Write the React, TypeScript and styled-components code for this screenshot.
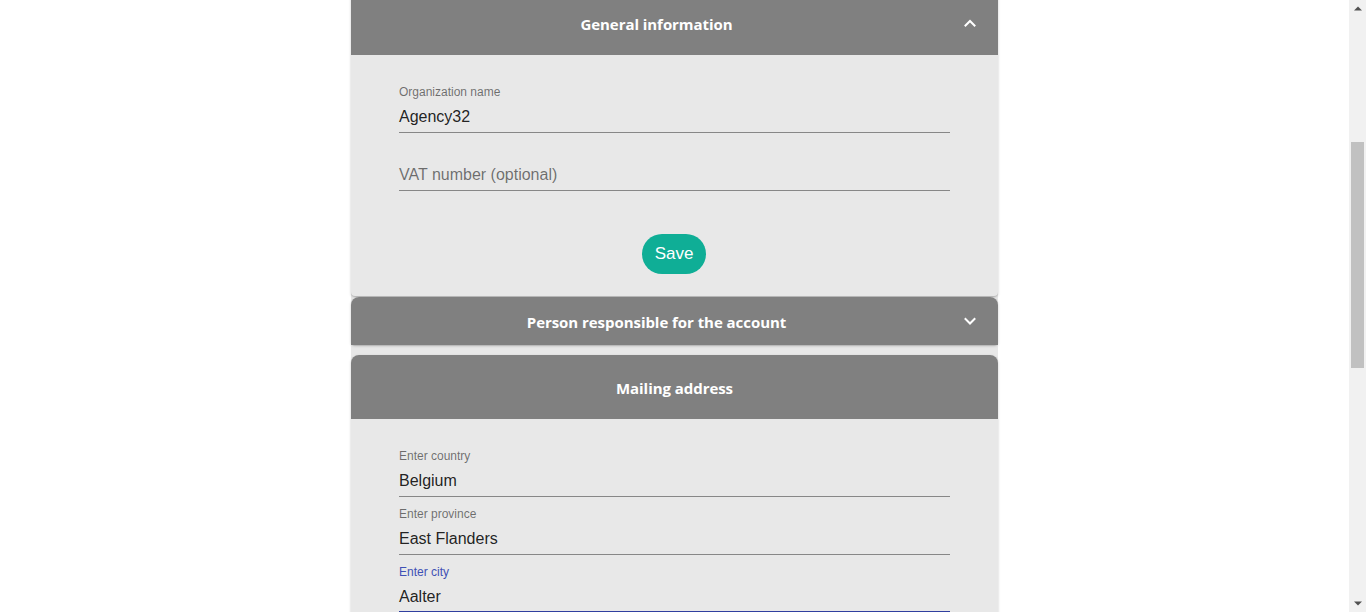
import React from "react";
import styled, { createGlobalStyle } from "styled-components";

const GlobalStyle = createGlobalStyle`
  html, body {
    margin: 0;
    padding: 0;
    background: #ffffff;
    overflow: hidden;
  }
  * { box-sizing: border-box; }
`;

const Viewport = styled.div`
  display: flex;
  height: 100vh;
  width: 100vw;
  overflow: hidden;
  font-family: "Liberation Sans", Arial, sans-serif;
`;

const Main = styled.main`
  flex: 1;
  display: flex;
  justify-content: center;
  overflow: hidden;
`;

const Column = styled.div`
  width: 647px;
  margin-top: -9px;
  display: flex;
  flex-direction: column;
  background: #e8e8e8;
  align-self: flex-start;
`;

const Panel = styled.section<{ $gap?: number; $rounded?: boolean }>`
  margin-top: ${(p) => p.$gap ?? 0}px;
  background: #e8e8e8;
  border-radius: ${(p) => (p.$rounded ? "8px 8px 4px 4px" : "0 0 4px 4px")};
  box-shadow: 0 1px 3px rgba(0, 0, 0, 0.18), 0 1px 1px rgba(0, 0, 0, 0.1);
`;

const Summary = styled.header<{ $height: number; $rounded?: boolean; $withIcon?: boolean }>`
  height: ${(p) => p.$height}px;
  display: flex;
  align-items: center;
  padding-top: 2px;
  padding-left: ${(p) => (p.$withIcon ? 24 : 0)}px;
  background: #808080;
  border-radius: ${(p) => (p.$rounded ? "8px 8px 0 0" : "0")};
`;

const Title = styled.h2`
  flex: 1;
  margin: 0;
  text-align: center;
  color: #ffffff;
  font-family: "Open Sans", "Noto Sans", sans-serif;
  font-weight: 700;
  font-size: 15px;
  line-height: 20px;
  letter-spacing: -0.05px;
`;

const IconSlot = styled.span`
  width: 60px;
  display: flex;
  justify-content: center;
  padding-left: 4px;
  margin-top: -2px;
  color: #ffffff;
`;

const Body = styled.div<{ $bottom?: number }>`
  display: flex;
  flex-direction: column;
  gap: 10px;
  padding: 30px 48px ${(p) => p.$bottom ?? 0}px;
`;

const Field = styled.div`
  display: flex;
  flex-direction: column;
  height: 48px;
`;

const Label = styled.label<{ $focused?: boolean }>`
  display: block;
  height: 16px;
  padding-top: 1px;
  font-size: 12px;
  line-height: 12px;
  color: ${(p) => (p.$focused ? "#3f51b5" : "rgba(0,0,0,0.54)")};
`;

const InputRow = styled.div<{ $focused?: boolean; $placeholder?: boolean }>`
  height: 32px;
  padding-top: 6px;
  font-size: 16px;
  line-height: 19px;
  color: ${(p) => (p.$placeholder ? "rgba(0,0,0,0.54)" : "rgba(0,0,0,0.87)")};
  border-bottom: ${(p) => (p.$focused ? "2px solid #303f9f" : "1px solid rgba(0,0,0,0.42)")};
`;

const Actions = styled.div`
  display: flex;
  justify-content: center;
  margin-top: 33px;
  padding-right: 1px;
`;

const SaveButton = styled.button`
  width: 64px;
  height: 40px;
  padding: 0;
  border: none;
  border-radius: 20px;
  background: #0fae96;
  color: #ffffff;
  font-family: "Liberation Sans", Arial, sans-serif;
  font-size: 17px;
  cursor: pointer;
`;

const Scrollbar = styled.div`
  width: 17px;
  flex-shrink: 0;
  display: flex;
  flex-direction: column;
  background: #f1f1f1;
`;

const ArrowButton = styled.div`
  height: 17px;
  display: flex;
  align-items: center;
  justify-content: center;
  color: #505050;
`;

const Track = styled.div`
  flex: 1;
  padding: 125px 2px 0;
`;

const Thumb = styled.div`
  height: 226px;
  background: #c1c1c1;
`;

const Chevron = ({ up }: { up?: boolean }) => (
  <svg width="14" height="10" viewBox="0 0 14 10" fill="none">
    <path
      d={up ? "M2.5 7.5 L7 3 L11.5 7.5" : "M2.5 3 L7 7.5 L11.5 3"}
      stroke="#fff"
      strokeWidth="2"
      strokeLinecap="square"
    />
  </svg>
);

const Triangle = ({ up }: { up?: boolean }) => (
  <svg width="8" height="5" viewBox="0 0 8 5">
    <path d={up ? "M0 4.5 L4 0.5 L8 4.5 Z" : "M0 0.5 L4 4.5 L8 0.5 Z"} fill="currentColor" />
  </svg>
);

type FieldProps = { label: string; value?: string; focused?: boolean };

const TextField = ({ label, value, focused }: FieldProps) => (
  <Field>
    <Label $focused={focused}>{value !== undefined ? label : ""}</Label>
    <InputRow $focused={focused} $placeholder={value === undefined}>
      {value !== undefined ? value : label}
    </InputRow>
  </Field>
);

export default function App() {
  return (
    <>
      <GlobalStyle />
      <Viewport>
        <Main>
          <Column>
            <Panel>
              <Summary $height={64} $withIcon>
                <Title>General information</Title>
                <IconSlot>
                  <Chevron up />
                </IconSlot>
              </Summary>
              <Body $bottom={22}>
                <TextField label="Organization name" value="Agency32" />
                <TextField label="VAT number (optional)" />
                <Actions>
                  <SaveButton>Save</SaveButton>
                </Actions>
              </Body>
            </Panel>
            <Panel $gap={1} $rounded>
              <Summary $height={48} $rounded $withIcon>
                <Title>Person responsible for the account</Title>
                <IconSlot>
                  <Chevron />
                </IconSlot>
              </Summary>
            </Panel>
            <Panel $gap={10} $rounded>
              <Summary $height={64} $rounded>
                <Title>Mailing address</Title>
              </Summary>
              <Body $bottom={30}>
                <TextField label="Enter country" value="Belgium" />
                <TextField label="Enter province" value="East Flanders" />
                <TextField label="Enter city" value="Aalter" focused />
              </Body>
            </Panel>
          </Column>
        </Main>
        <Scrollbar>
          <ArrowButton>
            <Triangle up />
          </ArrowButton>
          <Track>
            <Thumb />
          </Track>
          <ArrowButton>
            <Triangle />
          </ArrowButton>
        </Scrollbar>
      </Viewport>
    </>
  );
}
